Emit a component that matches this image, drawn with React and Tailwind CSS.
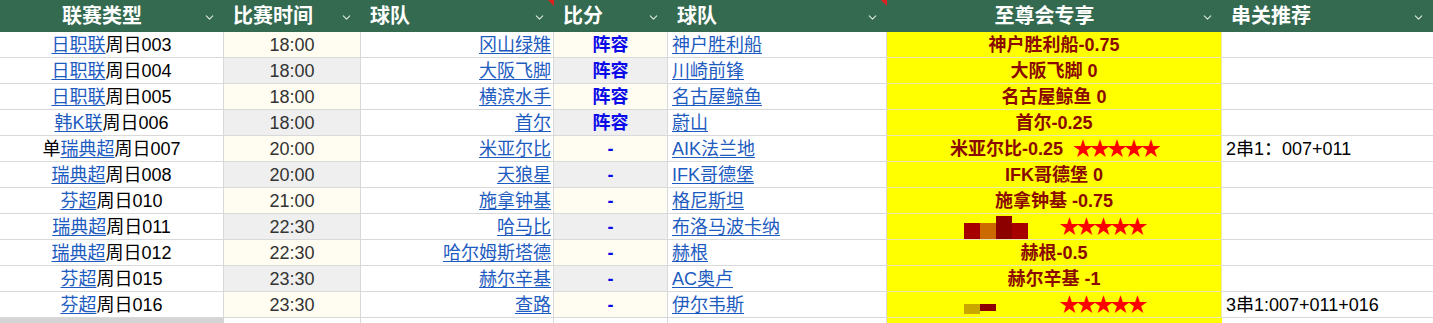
import { ChevronDown } from 'lucide-react';

const cols = 'grid grid-cols-[224px_137px_193px_114px_219px_335px_211px]';

const headers = [
  { label: '联赛类型', center: true },
  { label: '比赛时间' },
  { label: '球队', flag: true },
  { label: '比分' },
  { label: '球队', flag: true },
  { label: '至尊会专享', center: true },
  { label: '串关推荐' },
];

const rows = [
  { pre: '', league: '日职联', no: '周日003', time: '18:00', home: '冈山绿雉', score: '阵容', away: '神户胜利船', tip: '神户胜利船-0.75' },
  { pre: '', league: '日职联', no: '周日004', time: '18:00', home: '大阪飞脚', score: '阵容', away: '川崎前锋', tip: '大阪飞脚 0' },
  { pre: '', league: '日职联', no: '周日005', time: '18:00', home: '横滨水手', score: '阵容', away: '名古屋鲸鱼', tip: '名古屋鲸鱼 0' },
  { pre: '', league: '韩K联', no: '周日006', time: '18:00', home: '首尔', score: '阵容', away: '蔚山', tip: '首尔-0.25' },
  { pre: '单', league: '瑞典超', no: '周日007', time: '20:00', home: '米亚尔比', score: '-', away: 'AIK法兰地', tip: '米亚尔比-0.25', stars: true, combo: '2串1：007+011' },
  { pre: '', league: '瑞典超', no: '周日008', time: '20:00', home: '天狼星', score: '-', away: 'IFK哥德堡', tip: 'IFK哥德堡 0' },
  { pre: '', league: '芬超', no: '周日010', time: '21:00', home: '施拿钟基', score: '-', away: '格尼斯坦', tip: '施拿钟基 -0.75' },
  { pre: '', league: '瑞典超', no: '周日011', time: '22:30', home: '哈马比', score: '-', away: '布洛马波卡纳', mosaic: 'big', stars: true },
  { pre: '', league: '瑞典超', no: '周日012', time: '22:30', home: '哈尔姆斯塔德', score: '-', away: '赫根', tip: '赫根-0.5' },
  { pre: '', league: '芬超', no: '周日015', time: '23:30', home: '赫尔辛基', score: '-', away: 'AC奥卢', tip: '赫尔辛基 -1' },
  { pre: '', league: '芬超', no: '周日016', time: '23:30', home: '查路', score: '-', away: '伊尔韦斯', mosaic: 'small', stars: true, combo: '3串1:007+011+016' },
];

function Stars() {
  return <span className="text-[#ff0000] text-[20px] tracking-[-3px]">★★★★★</span>;
}

// pixelated blocks that hide part of the tip in the screenshot
function Mosaic({ size }) {
  if (size === 'big') {
    return (
      <div className="flex items-end h-[24px] w-[86px]">
        <div className="w-[16px] h-[16px] bg-[#a60000]" />
        <div className="w-[16px] h-[16px] bg-[#cc6a00]" />
        <div className="w-[16px] h-[23px] bg-[#8c0000]" />
        <div className="w-[16px] h-[16px] bg-[#a60000]" />
      </div>
    );
  }
  return (
    <div className="flex items-end h-[24px] w-[86px] pb-[3px]">
      <div className="w-[16px] h-[10px] bg-[#c9a600]" />
      <div className="w-[16px] h-[7px] mb-[3px] bg-[#8c0000]" />
    </div>
  );
}

function App() {
  const link = 'text-[#1d5bbf] underline underline-offset-2';
  return (
    <div
      className="w-[1433px] h-[323px] overflow-hidden bg-white"
      style={{ fontFamily: '"Liberation Sans", "Noto Sans CJK SC", sans-serif' }}
    >
      {/* header */}
      <div className={`${cols} h-[32px] bg-[#336a50] text-white`}>
        {headers.map((h, i) => (
          <div key={i} className="relative flex items-center h-full pl-[9px] pr-[8px]">
            <span className={`flex-1 text-[20px] font-bold leading-none ${h.center ? 'text-center pr-[8px]' : ''}`}>
              {h.label}
            </span>
            <ChevronDown size={13} strokeWidth={2} className="text-[#dfe9e3] mt-[2px]" />
            {h.flag && (
              <svg className="absolute top-0 right-0" width="6" height="6" viewBox="0 0 6 6">
                <polygon points="0,0 6,0 6,6" fill="#e02020" />
              </svg>
            )}
          </div>
        ))}
      </div>

      {/* rows */}
      {rows.map((r, i) => {
        const alt = i % 2 === 1 ? 'bg-[#efefef]' : 'bg-[#fffcf1]';
        return (
          <div key={i} className={`${cols} h-[26px] text-[18px] leading-none`}>
            <div className="flex items-center justify-center border-r border-b border-[#d9d9d9] text-black">
              {r.pre}
              <span className={link}>{r.league}</span>
              {r.no}
            </div>
            <div className={`flex items-center justify-center border-r border-b border-[#d9d9d9] text-[#333] ${alt}`}>
              {r.time}
            </div>
            <div className="flex items-center justify-end pr-[2px] border-r border-b border-[#d9d9d9]">
              <span className={link}>{r.home}</span>
            </div>
            <div className={`flex items-center justify-center border-r border-b border-[#d9d9d9] font-bold text-[#0a0ae8] ${alt}`}>
              {r.score}
            </div>
            <div className="flex items-center pl-[4px] border-r border-b border-[#d9d9d9]">
              <span className={link}>{r.away}</span>
            </div>
            <div className="flex items-center justify-center gap-[10px] bg-[#ffff00] border-r border-b border-[#e9e9b0] font-bold text-[#8b0a00]">
              {r.mosaic ? <Mosaic size={r.mosaic} /> : <span>{r.tip}</span>}
              {r.stars && <Stars />}
            </div>
            <div className="flex items-center pl-[4px] border-b border-[#d9d9d9] text-black">
              {r.combo}
            </div>
          </div>
        );
      })}

      {/* partial row + scrollbar */}
      <div className={`${cols} h-[5px]`}>
        <div className="bg-[#d4d4d4]" />
        <div className="border-r border-[#d9d9d9]" />
        <div className="border-r border-[#d9d9d9]" />
        <div className="border-r border-[#d9d9d9]" />
        <div className="border-r border-[#d9d9d9]" />
        <div className="bg-[#ffff00]" />
        <div />
      </div>
    </div>
  );
}

export default App;
